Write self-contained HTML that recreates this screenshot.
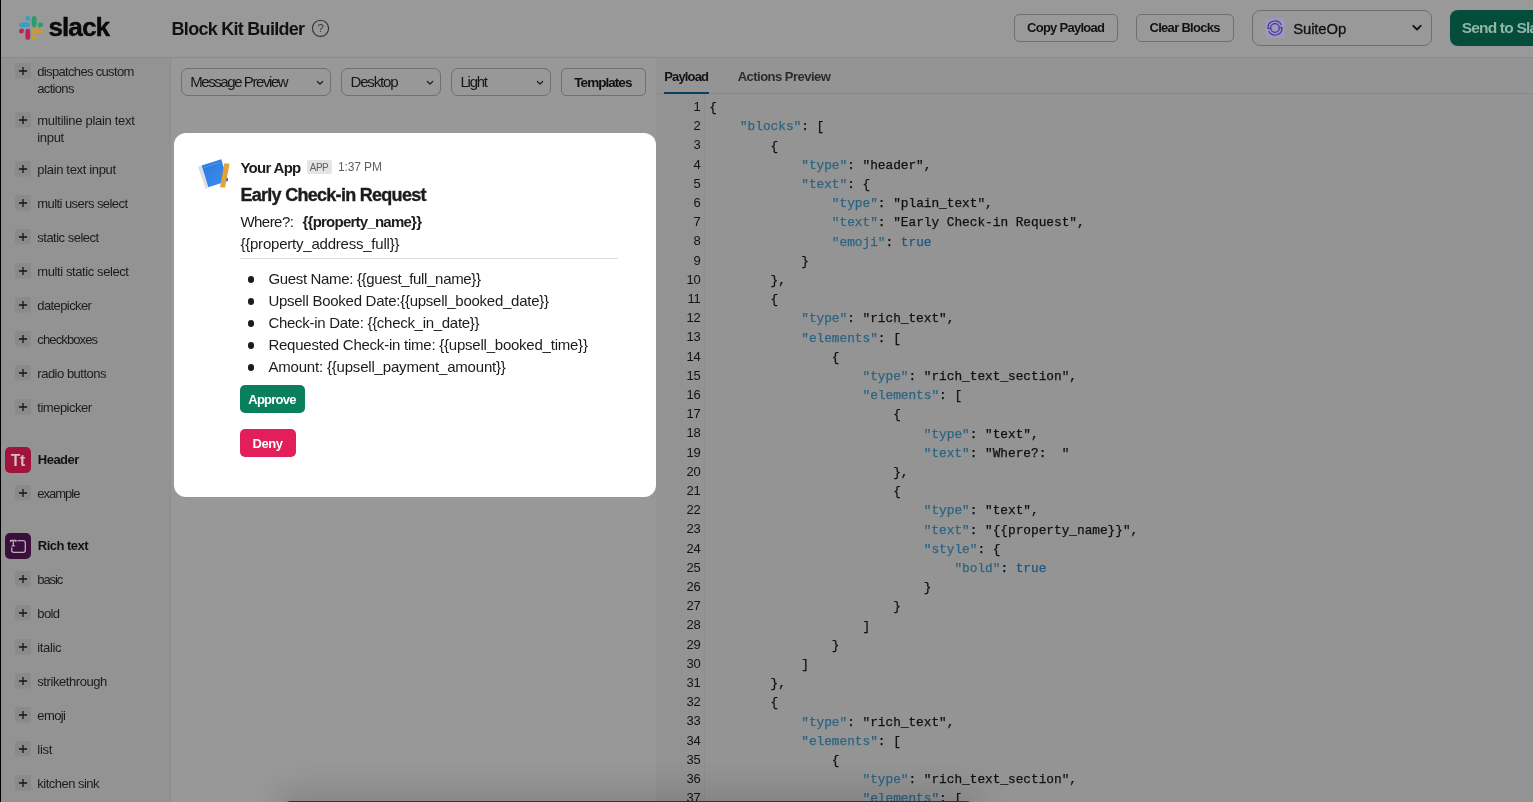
<!DOCTYPE html>
<html lang="en"><head><meta charset="utf-8"><title>Block Kit Builder</title>
<style>
html,body{margin:0;padding:0}
body{width:1533px;height:802px;overflow:hidden;background:#999999;position:relative;font-family:"Liberation Sans", sans-serif;will-change:transform}
.b{position:absolute;box-sizing:content-box}
.t{position:absolute;white-space:pre}
.code{position:absolute;left:0;top:0;width:1533px;height:802px;overflow:hidden}
.ln{position:absolute;left:0;width:1533px;height:19.2px}
.no{position:absolute;right:832.5px;top:-1.2px;font:400 13px/19.2px "Liberation Sans", sans-serif;color:#131313;letter-spacing:-.2px}
.cd{position:absolute;top:0;white-space:pre;font:400 12.8px/19.2px "Liberation Mono", monospace;letter-spacing:-.02px;-webkit-text-stroke:.25px}
</style></head>
<body>
<div class="b" style="left:0px;top:57px;width:1533px;height:1px;background:#8b8b8b"></div>
<svg class="b" style="left:18.5px;top:16px" width="24" height="24" viewBox="0 0 54 54">
<g fill="none">
<path d="M19.7 0a5.4 5.4 0 0 0 0 10.8h5.4V5.4A5.4 5.4 0 0 0 19.7 0m0 14.4H5.4a5.4 5.4 0 0 0 0 10.8h14.3a5.4 5.4 0 0 0 0-10.8" fill="#35a0c4"/>
<path d="M54 19.8a5.4 5.4 0 0 0-10.8 0v5.4h5.4A5.4 5.4 0 0 0 54 19.8m-14.4 0V5.4a5.4 5.4 0 0 0-10.8 0v14.4a5.4 5.4 0 0 0 10.8 0" fill="#2f9a6c"/>
<path d="M34.2 54a5.4 5.4 0 0 0 0-10.8h-5.4v5.4a5.4 5.4 0 0 0 5.4 5.4m0-14.4h14.4a5.4 5.4 0 0 0 0-10.8H34.2a5.4 5.4 0 0 0 0 10.8" fill="#c99a33"/>
<path d="M0 34.2a5.4 5.4 0 0 0 10.8 0v-5.4H5.4A5.4 5.4 0 0 0 0 34.2m14.4 0v14.4a5.4 5.4 0 0 0 10.8 0V34.2a5.4 5.4 0 0 0-10.8 0" fill="#bd2455"/>
</g></svg>
<svg class="b" style="left:310.9px;top:18.5px" width="19" height="19" viewBox="0 0 19 19"><circle cx="9.5" cy="9.3" r="8.1" fill="none" stroke="#333" stroke-width="1.1"/></svg>
<div class="b" style="left:1014px;top:14.3px;width:101.7px;height:25.5px;border:1px solid #6f6f6f;border-radius:5px;"></div>
<div class="b" style="left:1136px;top:14.3px;width:96px;height:25.5px;border:1px solid #6f6f6f;border-radius:5px;"></div>
<div class="b" style="left:1252.3px;top:10px;width:177.4px;height:33.6px;border:1px solid #6f6f6f;border-radius:8px;"></div>
<svg class="b" style="left:1265px;top:18px" width="20" height="20" viewBox="0 0 20 20"><rect width="20" height="20" rx="3" fill="#a098b9"/>
<g fill="none" stroke="#4a37a0" stroke-width="1.25" stroke-linecap="round"><path d="M5.6 10.4H3A7 7 0 0 1 16.06 6.5"/><path d="M14.4 9.6H17A7 7 0 0 1 3.94 13.5"/><circle cx="10" cy="10" r="4.3"/></g></svg>
<svg class="b" style="left:1411px;top:23px" width="12" height="10" viewBox="0 0 12 10"><path d="M2.3 2.8 6 6.5 9.7 2.8" fill="none" stroke="#111" stroke-width="1.8" stroke-linecap="round" stroke-linejoin="round"/></svg>
<div class="b" style="left:1450px;top:10px;width:100px;height:35.6px;background:#044d3a;border-radius:8px"></div>
<div class="b" style="left:170px;top:58px;width:486px;height:744px;background:#989898"></div>
<div class="b" style="left:0px;top:58px;width:170px;height:744px;background:#939393"></div>
<div class="b" style="left:170px;top:58px;width:1px;height:744px;background:#8f8f8f"></div>
<svg class="b" style="left:15px;top:62.8px" width="16" height="16" viewBox="0 0 16 16"><rect width="16" height="15.6" rx="2.5" fill="#8a8a8a"/><path d="M8 3.9v8.2M3.9 8h8.2" stroke="#151515" stroke-width="1.3" fill="none"/></svg>
<svg class="b" style="left:15px;top:111.8px" width="16" height="16" viewBox="0 0 16 16"><rect width="16" height="15.6" rx="2.5" fill="#8a8a8a"/><path d="M8 3.9v8.2M3.9 8h8.2" stroke="#151515" stroke-width="1.3" fill="none"/></svg>
<svg class="b" style="left:15px;top:160.8px" width="16" height="16" viewBox="0 0 16 16"><rect width="16" height="15.6" rx="2.5" fill="#8a8a8a"/><path d="M8 3.9v8.2M3.9 8h8.2" stroke="#151515" stroke-width="1.3" fill="none"/></svg>
<svg class="b" style="left:15px;top:194.8px" width="16" height="16" viewBox="0 0 16 16"><rect width="16" height="15.6" rx="2.5" fill="#8a8a8a"/><path d="M8 3.9v8.2M3.9 8h8.2" stroke="#151515" stroke-width="1.3" fill="none"/></svg>
<svg class="b" style="left:15px;top:228.8px" width="16" height="16" viewBox="0 0 16 16"><rect width="16" height="15.6" rx="2.5" fill="#8a8a8a"/><path d="M8 3.9v8.2M3.9 8h8.2" stroke="#151515" stroke-width="1.3" fill="none"/></svg>
<svg class="b" style="left:15px;top:262.8px" width="16" height="16" viewBox="0 0 16 16"><rect width="16" height="15.6" rx="2.5" fill="#8a8a8a"/><path d="M8 3.9v8.2M3.9 8h8.2" stroke="#151515" stroke-width="1.3" fill="none"/></svg>
<svg class="b" style="left:15px;top:296.8px" width="16" height="16" viewBox="0 0 16 16"><rect width="16" height="15.6" rx="2.5" fill="#8a8a8a"/><path d="M8 3.9v8.2M3.9 8h8.2" stroke="#151515" stroke-width="1.3" fill="none"/></svg>
<svg class="b" style="left:15px;top:330.8px" width="16" height="16" viewBox="0 0 16 16"><rect width="16" height="15.6" rx="2.5" fill="#8a8a8a"/><path d="M8 3.9v8.2M3.9 8h8.2" stroke="#151515" stroke-width="1.3" fill="none"/></svg>
<svg class="b" style="left:15px;top:364.8px" width="16" height="16" viewBox="0 0 16 16"><rect width="16" height="15.6" rx="2.5" fill="#8a8a8a"/><path d="M8 3.9v8.2M3.9 8h8.2" stroke="#151515" stroke-width="1.3" fill="none"/></svg>
<svg class="b" style="left:15px;top:398.8px" width="16" height="16" viewBox="0 0 16 16"><rect width="16" height="15.6" rx="2.5" fill="#8a8a8a"/><path d="M8 3.9v8.2M3.9 8h8.2" stroke="#151515" stroke-width="1.3" fill="none"/></svg>
<svg class="b" style="left:15px;top:484.8px" width="16" height="16" viewBox="0 0 16 16"><rect width="16" height="15.6" rx="2.5" fill="#8a8a8a"/><path d="M8 3.9v8.2M3.9 8h8.2" stroke="#151515" stroke-width="1.3" fill="none"/></svg>
<svg class="b" style="left:15px;top:570.8px" width="16" height="16" viewBox="0 0 16 16"><rect width="16" height="15.6" rx="2.5" fill="#8a8a8a"/><path d="M8 3.9v8.2M3.9 8h8.2" stroke="#151515" stroke-width="1.3" fill="none"/></svg>
<svg class="b" style="left:15px;top:604.8px" width="16" height="16" viewBox="0 0 16 16"><rect width="16" height="15.6" rx="2.5" fill="#8a8a8a"/><path d="M8 3.9v8.2M3.9 8h8.2" stroke="#151515" stroke-width="1.3" fill="none"/></svg>
<svg class="b" style="left:15px;top:638.8px" width="16" height="16" viewBox="0 0 16 16"><rect width="16" height="15.6" rx="2.5" fill="#8a8a8a"/><path d="M8 3.9v8.2M3.9 8h8.2" stroke="#151515" stroke-width="1.3" fill="none"/></svg>
<svg class="b" style="left:15px;top:672.8px" width="16" height="16" viewBox="0 0 16 16"><rect width="16" height="15.6" rx="2.5" fill="#8a8a8a"/><path d="M8 3.9v8.2M3.9 8h8.2" stroke="#151515" stroke-width="1.3" fill="none"/></svg>
<svg class="b" style="left:15px;top:706.8px" width="16" height="16" viewBox="0 0 16 16"><rect width="16" height="15.6" rx="2.5" fill="#8a8a8a"/><path d="M8 3.9v8.2M3.9 8h8.2" stroke="#151515" stroke-width="1.3" fill="none"/></svg>
<svg class="b" style="left:15px;top:740.8px" width="16" height="16" viewBox="0 0 16 16"><rect width="16" height="15.6" rx="2.5" fill="#8a8a8a"/><path d="M8 3.9v8.2M3.9 8h8.2" stroke="#151515" stroke-width="1.3" fill="none"/></svg>
<svg class="b" style="left:15px;top:774.8px" width="16" height="16" viewBox="0 0 16 16"><rect width="16" height="15.6" rx="2.5" fill="#8a8a8a"/><path d="M8 3.9v8.2M3.9 8h8.2" stroke="#151515" stroke-width="1.3" fill="none"/></svg>
<div class="b" style="left:5px;top:446.8px;width:25.9px;height:25.9px;background:#a0143b;border-radius:5px"></div>
<div class="b" style="left:5px;top:532.8px;width:25.9px;height:26px;background:#3a0f3c;border-radius:5px"></div>
<svg class="b" style="left:5px;top:532.8px" width="26" height="26" viewBox="0 0 26 26"><g fill="none" stroke="#bfaac3" stroke-width="1.3" stroke-linecap="round" stroke-linejoin="round"><path d="M5.6 8.6V7.5h5.4v1.1M8.3 7.5v5.4M7.1 12.9h2.4"/><path d="M13 7.7h5.2a2.1 2.1 0 0 1 2.1 2.1v7.4a2.1 2.1 0 0 1-2.1 2.1H8.8a2.1 2.1 0 0 1-2.1-2.1v-2.3"/></g></svg>
<div class="b" style="left:181px;top:68px;width:147.7px;height:25.6px;border:1px solid #6f6f6f;border-radius:7px;"></div>
<svg class="b" style="left:316.2px;top:79.5px" width="8" height="6" viewBox="0 0 8 6"><path d="M1.4 1.5 4 4.1 6.6 1.5" fill="none" stroke="#1a1a1a" stroke-width="1.2" stroke-linecap="round" stroke-linejoin="round"/></svg>
<div class="b" style="left:341.3px;top:68px;width:97.5px;height:25.6px;border:1px solid #6f6f6f;border-radius:7px;"></div>
<svg class="b" style="left:426.3px;top:79.5px" width="8" height="6" viewBox="0 0 8 6"><path d="M1.4 1.5 4 4.1 6.6 1.5" fill="none" stroke="#1a1a1a" stroke-width="1.2" stroke-linecap="round" stroke-linejoin="round"/></svg>
<div class="b" style="left:451.3px;top:68px;width:97.3px;height:25.6px;border:1px solid #6f6f6f;border-radius:7px;"></div>
<svg class="b" style="left:536.1px;top:79.5px" width="8" height="6" viewBox="0 0 8 6"><path d="M1.4 1.5 4 4.1 6.6 1.5" fill="none" stroke="#1a1a1a" stroke-width="1.2" stroke-linecap="round" stroke-linejoin="round"/></svg>
<div class="b" style="left:561px;top:68px;width:82.8px;height:25.6px;border:1px solid #6f6f6f;border-radius:5px;"></div>
<div class="b" style="left:174px;top:133.3px;width:481.7px;height:363.3px;background:#fff;border-radius:12px"></div>
<svg class="b" style="left:197px;top:158px" width="34" height="32" viewBox="0 0 34 32">
<defs><linearGradient id="bk" x1="0" y1="0" x2="1" y2="1"><stop offset="0" stop-color="#2b78dc"/><stop offset="1" stop-color="#3f8ef0"/></linearGradient></defs>
<path d="M1 8.7 4.75 7.5 11.3 29.3 8.8 31.6z" fill="#dcdee3"/>
<path d="M4.75 7.5 24.25 1.2 30.8 23 11.3 29.3z" fill="url(#bk)"/>
<path d="M7.2 9.4 22.6 4.4" fill="none" stroke="#8fbdf5" stroke-width=".7" stroke-dasharray="1.3 1"/>
<path d="M27.4 5.2 32.6 5.8 28 29.5 23.1 29.3z" fill="#e2a336"/>
<path d="M29.7 20.1 31.1 20.3 30.6 23.2 29.2 23z" fill="#3a5dae"/>
</svg>
<div class="b" style="left:306.8px;top:160px;width:25px;height:13.8px;background:#e4e4e4;border-radius:2px"></div>
<div class="b" style="left:240.4px;top:258px;width:378px;height:1px;background:#dddddd"></div>
<div class="b" style="left:247.6px;top:276.0px;width:6.6px;height:6.6px;background:#1d1c1d;border-radius:50%"></div>
<div class="b" style="left:247.6px;top:298.0px;width:6.6px;height:6.6px;background:#1d1c1d;border-radius:50%"></div>
<div class="b" style="left:247.6px;top:320.0px;width:6.6px;height:6.6px;background:#1d1c1d;border-radius:50%"></div>
<div class="b" style="left:247.6px;top:342.0px;width:6.6px;height:6.6px;background:#1d1c1d;border-radius:50%"></div>
<div class="b" style="left:247.6px;top:364.0px;width:6.6px;height:6.6px;background:#1d1c1d;border-radius:50%"></div>
<div class="b" style="left:240px;top:385px;width:64.7px;height:27.7px;background:#0a7f5e;border-radius:5px"></div>
<div class="b" style="left:240px;top:429px;width:56px;height:27.6px;background:#e21f5b;border-radius:5px"></div>
<div class="b" style="left:656px;top:58px;width:877px;height:744px;background:#949494"></div>
<div class="b" style="left:656px;top:93px;width:877px;height:1px;background:#898989"></div>
<div class="b" style="left:664.3px;top:92px;width:44.7px;height:2px;background:#0b3c62"></div>
<div class="b" style="left:656px;top:94px;width:48px;height:708px;background:#939393"></div>
<div class="b" style="left:704px;top:94px;width:1px;height:708px;background:#8e8e8e"></div>
<div class="code"><div class="ln" style="top:98.1px"><span class="no">1</span><span class="cd" style="left:709.30px"><span style="color:#101010">{</span></span></div>
<div class="ln" style="top:117.3px"><span class="no">2</span><span class="cd" style="left:739.94px"><span style="color:#2c6482">&quot;blocks&quot;</span><span style="color:#101010">: [</span></span></div>
<div class="ln" style="top:136.5px"><span class="no">3</span><span class="cd" style="left:770.58px"><span style="color:#101010">{</span></span></div>
<div class="ln" style="top:155.7px"><span class="no">4</span><span class="cd" style="left:801.22px"><span style="color:#2c6482">&quot;type&quot;</span><span style="color:#101010">: &quot;header&quot;,</span></span></div>
<div class="ln" style="top:174.9px"><span class="no">5</span><span class="cd" style="left:801.22px"><span style="color:#2c6482">&quot;text&quot;</span><span style="color:#101010">: {</span></span></div>
<div class="ln" style="top:194.1px"><span class="no">6</span><span class="cd" style="left:831.86px"><span style="color:#2c6482">&quot;type&quot;</span><span style="color:#101010">: &quot;plain_text&quot;,</span></span></div>
<div class="ln" style="top:213.3px"><span class="no">7</span><span class="cd" style="left:831.86px"><span style="color:#2c6482">&quot;text&quot;</span><span style="color:#101010">: &quot;Early Check-in Request&quot;,</span></span></div>
<div class="ln" style="top:232.5px"><span class="no">8</span><span class="cd" style="left:831.86px"><span style="color:#2c6482">&quot;emoji&quot;</span><span style="color:#101010">: </span><span style="color:#1d5680">true</span></span></div>
<div class="ln" style="top:251.7px"><span class="no">9</span><span class="cd" style="left:801.22px"><span style="color:#101010">}</span></span></div>
<div class="ln" style="top:270.9px"><span class="no">10</span><span class="cd" style="left:770.58px"><span style="color:#101010">},</span></span></div>
<div class="ln" style="top:290.1px"><span class="no">11</span><span class="cd" style="left:770.58px"><span style="color:#101010">{</span></span></div>
<div class="ln" style="top:309.3px"><span class="no">12</span><span class="cd" style="left:801.22px"><span style="color:#2c6482">&quot;type&quot;</span><span style="color:#101010">: &quot;rich_text&quot;,</span></span></div>
<div class="ln" style="top:328.5px"><span class="no">13</span><span class="cd" style="left:801.22px"><span style="color:#2c6482">&quot;elements&quot;</span><span style="color:#101010">: [</span></span></div>
<div class="ln" style="top:347.7px"><span class="no">14</span><span class="cd" style="left:831.86px"><span style="color:#101010">{</span></span></div>
<div class="ln" style="top:366.9px"><span class="no">15</span><span class="cd" style="left:862.50px"><span style="color:#2c6482">&quot;type&quot;</span><span style="color:#101010">: &quot;rich_text_section&quot;,</span></span></div>
<div class="ln" style="top:386.1px"><span class="no">16</span><span class="cd" style="left:862.50px"><span style="color:#2c6482">&quot;elements&quot;</span><span style="color:#101010">: [</span></span></div>
<div class="ln" style="top:405.3px"><span class="no">17</span><span class="cd" style="left:893.14px"><span style="color:#101010">{</span></span></div>
<div class="ln" style="top:424.5px"><span class="no">18</span><span class="cd" style="left:923.78px"><span style="color:#2c6482">&quot;type&quot;</span><span style="color:#101010">: &quot;text&quot;,</span></span></div>
<div class="ln" style="top:443.7px"><span class="no">19</span><span class="cd" style="left:923.78px"><span style="color:#2c6482">&quot;text&quot;</span><span style="color:#101010">: &quot;Where?:  &quot;</span></span></div>
<div class="ln" style="top:462.9px"><span class="no">20</span><span class="cd" style="left:893.14px"><span style="color:#101010">},</span></span></div>
<div class="ln" style="top:482.1px"><span class="no">21</span><span class="cd" style="left:893.14px"><span style="color:#101010">{</span></span></div>
<div class="ln" style="top:501.3px"><span class="no">22</span><span class="cd" style="left:923.78px"><span style="color:#2c6482">&quot;type&quot;</span><span style="color:#101010">: &quot;text&quot;,</span></span></div>
<div class="ln" style="top:520.5px"><span class="no">23</span><span class="cd" style="left:923.78px"><span style="color:#2c6482">&quot;text&quot;</span><span style="color:#101010">: &quot;{{property_name}}&quot;,</span></span></div>
<div class="ln" style="top:539.7px"><span class="no">24</span><span class="cd" style="left:923.78px"><span style="color:#2c6482">&quot;style&quot;</span><span style="color:#101010">: {</span></span></div>
<div class="ln" style="top:558.9px"><span class="no">25</span><span class="cd" style="left:954.42px"><span style="color:#2c6482">&quot;bold&quot;</span><span style="color:#101010">: </span><span style="color:#1d5680">true</span></span></div>
<div class="ln" style="top:578.1px"><span class="no">26</span><span class="cd" style="left:923.78px"><span style="color:#101010">}</span></span></div>
<div class="ln" style="top:597.3px"><span class="no">27</span><span class="cd" style="left:893.14px"><span style="color:#101010">}</span></span></div>
<div class="ln" style="top:616.5px"><span class="no">28</span><span class="cd" style="left:862.50px"><span style="color:#101010">]</span></span></div>
<div class="ln" style="top:635.7px"><span class="no">29</span><span class="cd" style="left:831.86px"><span style="color:#101010">}</span></span></div>
<div class="ln" style="top:654.9px"><span class="no">30</span><span class="cd" style="left:801.22px"><span style="color:#101010">]</span></span></div>
<div class="ln" style="top:674.1px"><span class="no">31</span><span class="cd" style="left:770.58px"><span style="color:#101010">},</span></span></div>
<div class="ln" style="top:693.3px"><span class="no">32</span><span class="cd" style="left:770.58px"><span style="color:#101010">{</span></span></div>
<div class="ln" style="top:712.5px"><span class="no">33</span><span class="cd" style="left:801.22px"><span style="color:#2c6482">&quot;type&quot;</span><span style="color:#101010">: &quot;rich_text&quot;,</span></span></div>
<div class="ln" style="top:731.7px"><span class="no">34</span><span class="cd" style="left:801.22px"><span style="color:#2c6482">&quot;elements&quot;</span><span style="color:#101010">: [</span></span></div>
<div class="ln" style="top:750.9px"><span class="no">35</span><span class="cd" style="left:831.86px"><span style="color:#101010">{</span></span></div>
<div class="ln" style="top:770.1px"><span class="no">36</span><span class="cd" style="left:862.50px"><span style="color:#2c6482">&quot;type&quot;</span><span style="color:#101010">: &quot;rich_text_section&quot;,</span></span></div>
<div class="ln" style="top:789.3px"><span class="no">37</span><span class="cd" style="left:862.50px"><span style="color:#2c6482">&quot;elements&quot;</span><span style="color:#101010">: [</span></span></div></div>
<div class="b" style="left:282.5px;top:800.9px;width:691px;height:10px;background:#333;border-radius:8px 8px 0 0;box-shadow:0 0 34px 6px rgba(0,0,0,.2)"></div>
<div class="b" style="left:0px;top:0px;width:1px;height:802px;background:#000"></div>
<span class="t" style="left:48.40px;top:8.72px;font-size:26.2px;line-height:37px;color:#0a0a0a;font-weight:700;letter-spacing:-0.937px;-webkit-text-stroke:.4px #0a0a0a;">slack</span>
<span class="t" style="left:171.60px;top:16.86px;font-size:18px;line-height:25px;color:#121212;font-weight:700;letter-spacing:-0.727px;">Block Kit Builder</span>
<span class="t" style="left:317.60px;top:20.35px;font-size:11.4px;line-height:16px;color:#3a3a3a;">?</span>
<span class="t" style="left:1027.00px;top:18.50px;font-size:13px;line-height:18px;color:#121212;font-weight:700;letter-spacing:-0.724px;">Copy Payload</span>
<span class="t" style="left:1149.50px;top:18.50px;font-size:13px;line-height:18px;color:#121212;font-weight:700;letter-spacing:-0.706px;">Clear Blocks</span>
<span class="t" style="left:1293.20px;top:19.07px;font-size:14.8px;line-height:21px;color:#121212;letter-spacing:-0.078px;-webkit-text-stroke:.3px #121212;">SuiteOp</span>
<span class="t" style="left:1461.70px;top:16.63px;font-size:15.5px;line-height:22px;color:#93b5a8;font-weight:700;letter-spacing:-0.805px;">Send to Slack</span>
<span class="t" style="left:37.30px;top:62.70px;font-size:13px;line-height:18px;color:#1c1c1c;letter-spacing:-0.667px;">dispatches custom</span>
<span class="t" style="left:37.30px;top:79.70px;font-size:13px;line-height:18px;color:#1c1c1c;letter-spacing:-0.684px;">actions</span>
<span class="t" style="left:37.30px;top:111.70px;font-size:13px;line-height:18px;color:#1c1c1c;letter-spacing:-0.307px;">multiline plain text</span>
<span class="t" style="left:37.30px;top:128.70px;font-size:13px;line-height:18px;color:#1c1c1c;letter-spacing:-0.326px;">input</span>
<span class="t" style="left:37.30px;top:160.70px;font-size:13px;line-height:18px;color:#1c1c1c;letter-spacing:-0.336px;">plain text input</span>
<span class="t" style="left:37.30px;top:194.70px;font-size:13px;line-height:18px;color:#1c1c1c;letter-spacing:-0.572px;">multi users select</span>
<span class="t" style="left:37.30px;top:228.70px;font-size:13px;line-height:18px;color:#1c1c1c;letter-spacing:-0.510px;">static select</span>
<span class="t" style="left:37.30px;top:262.70px;font-size:13px;line-height:18px;color:#1c1c1c;letter-spacing:-0.405px;">multi static select</span>
<span class="t" style="left:37.30px;top:296.70px;font-size:13px;line-height:18px;color:#1c1c1c;letter-spacing:-0.598px;">datepicker</span>
<span class="t" style="left:37.30px;top:330.70px;font-size:13px;line-height:18px;color:#1c1c1c;letter-spacing:-0.873px;">checkboxes</span>
<span class="t" style="left:37.30px;top:364.70px;font-size:13px;line-height:18px;color:#1c1c1c;letter-spacing:-0.489px;">radio buttons</span>
<span class="t" style="left:37.30px;top:398.70px;font-size:13px;line-height:18px;color:#1c1c1c;letter-spacing:-0.494px;">timepicker</span>
<span class="t" style="left:37.30px;top:484.70px;font-size:13px;line-height:18px;color:#1c1c1c;letter-spacing:-1.007px;">example</span>
<span class="t" style="left:37.30px;top:570.70px;font-size:13px;line-height:18px;color:#1c1c1c;letter-spacing:-1.090px;">basic</span>
<span class="t" style="left:37.30px;top:604.70px;font-size:13px;line-height:18px;color:#1c1c1c;letter-spacing:-0.626px;">bold</span>
<span class="t" style="left:37.30px;top:638.70px;font-size:13px;line-height:18px;color:#1c1c1c;letter-spacing:-0.363px;">italic</span>
<span class="t" style="left:37.30px;top:672.70px;font-size:13px;line-height:18px;color:#1c1c1c;letter-spacing:-0.430px;">strikethrough</span>
<span class="t" style="left:37.30px;top:706.70px;font-size:13px;line-height:18px;color:#1c1c1c;letter-spacing:-0.595px;">emoji</span>
<span class="t" style="left:37.30px;top:740.70px;font-size:13px;line-height:18px;color:#1c1c1c;letter-spacing:-0.297px;">list</span>
<span class="t" style="left:37.30px;top:774.70px;font-size:13px;line-height:18px;color:#1c1c1c;letter-spacing:-0.520px;">kitchen sink</span>
<span class="t" style="left:10.80px;top:450.19px;font-size:15.6px;line-height:22px;color:#d6bec8;font-weight:700;letter-spacing:-0.419px;">Tt</span>
<span class="t" style="left:37.80px;top:451.20px;font-size:13px;line-height:18px;color:#121212;font-weight:700;letter-spacing:-0.516px;">Header</span>
<span class="t" style="left:37.80px;top:537.30px;font-size:13px;line-height:18px;color:#121212;font-weight:700;letter-spacing:-0.526px;">Rich text</span>
<span class="t" style="left:190.20px;top:71.30px;font-size:15px;line-height:21px;color:#161616;letter-spacing:-1.421px;">Message Preview</span>
<span class="t" style="left:350.50px;top:71.30px;font-size:15px;line-height:21px;color:#161616;letter-spacing:-1.172px;">Desktop</span>
<span class="t" style="left:460.50px;top:71.30px;font-size:15px;line-height:21px;color:#161616;letter-spacing:-1.258px;">Light</span>
<span class="t" style="left:574.30px;top:72.82px;font-size:13.5px;line-height:19px;color:#121212;font-weight:700;letter-spacing:-0.960px;">Templates</span>
<span class="t" style="left:240.40px;top:156.50px;font-size:15px;line-height:21px;color:#1d1c1d;font-weight:700;letter-spacing:-0.704px;">Your App</span>
<span class="t" style="left:309.80px;top:160.94px;font-size:10px;line-height:14px;color:#616061;letter-spacing:-0.508px;">APP</span>
<span class="t" style="left:338.00px;top:159.14px;font-size:12px;line-height:17px;color:#616061;letter-spacing:-0.117px;">1:37 PM</span>
<span class="t" style="left:240.40px;top:183.26px;font-size:18px;line-height:25px;color:#1d1c1d;font-weight:700;letter-spacing:-0.713px;-webkit-text-stroke:.35px #1d1c1d;">Early Check-in Request</span>
<span class="t" style="left:240.40px;top:210.70px;font-size:15px;line-height:21px;color:#1d1c1d;letter-spacing:-0.534px;">Where?:</span>
<span class="t" style="left:302.50px;top:210.70px;font-size:15px;line-height:21px;color:#1d1c1d;font-weight:700;letter-spacing:-0.764px;">{{property_name}}</span>
<span class="t" style="left:240.40px;top:232.50px;font-size:15px;line-height:21px;color:#1d1c1d;letter-spacing:-0.217px;">{{property_address_full}}</span>
<span class="t" style="left:268.40px;top:267.60px;font-size:15px;line-height:21px;color:#1d1c1d;letter-spacing:-0.335px;">Guest Name: {{guest_full_name}}</span>
<span class="t" style="left:268.40px;top:289.60px;font-size:15px;line-height:21px;color:#1d1c1d;letter-spacing:-0.262px;">Upsell Booked Date:{{upsell_booked_date}}</span>
<span class="t" style="left:268.40px;top:311.60px;font-size:15px;line-height:21px;color:#1d1c1d;letter-spacing:-0.289px;">Check-in Date: {{check_in_date}}</span>
<span class="t" style="left:268.40px;top:333.60px;font-size:15px;line-height:21px;color:#1d1c1d;letter-spacing:-0.233px;">Requested Check-in time: {{upsell_booked_time}}</span>
<span class="t" style="left:268.40px;top:355.60px;font-size:15px;line-height:21px;color:#1d1c1d;letter-spacing:-0.188px;">Amount: {{upsell_payment_amount}}</span>
<span class="t" style="left:248.30px;top:390.50px;font-size:13px;line-height:18px;color:#fff;font-weight:700;letter-spacing:-0.756px;">Approve</span>
<span class="t" style="left:252.50px;top:434.50px;font-size:13px;line-height:18px;color:#fff;font-weight:700;letter-spacing:-0.432px;">Deny</span>
<span class="t" style="left:664.30px;top:67.80px;font-size:13px;line-height:18px;color:#121212;font-weight:700;letter-spacing:-0.860px;">Payload</span>
<span class="t" style="left:737.70px;top:67.80px;font-size:13px;line-height:18px;color:#2c2c2c;font-weight:700;letter-spacing:-0.517px;">Actions Preview</span>
</body></html>
